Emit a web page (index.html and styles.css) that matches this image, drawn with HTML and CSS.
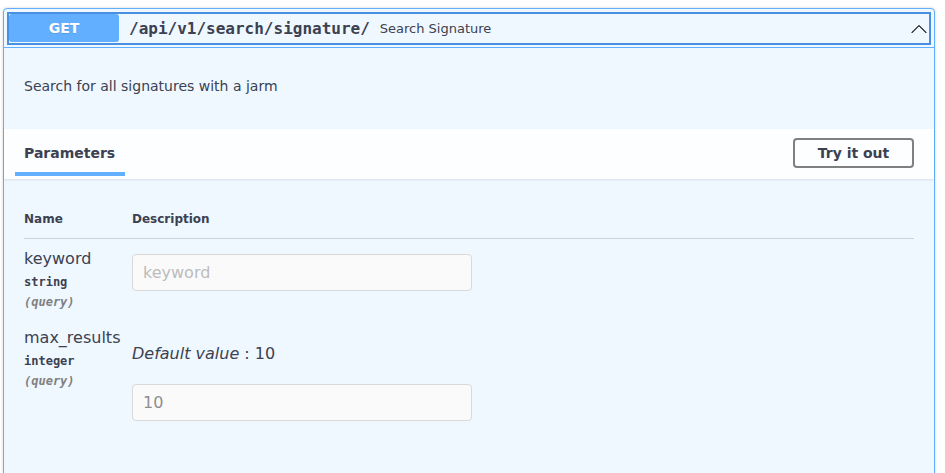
FILE: index.html
```html
<!DOCTYPE html>
<html>
<head>
<meta charset="utf-8">
<link rel="stylesheet" href="styles.css">
</head>
<body>
<div class="wrap">
  <div class="opblock">
    <div class="summary">
      <span class="method">GET</span>
      <span class="path">/api/v1/search/signature/</span>
      <span class="summary-desc">Search Signature</span>
      <svg class="arrow" width="20" height="20" viewBox="0 0 20 20"><path d="M17.418 14.908c-.184.181-.483.181-.668 0L10 8.183l-6.75 6.725c-.184.181-.483.181-.668 0a.464.464 0 0 1 0-.663l7.084-7.065a.49.49 0 0 1 .668 0l7.084 7.065c.184.183.184.481 0 .663z"/></svg>
    </div>
    <div class="desc-wrap">
      <p>Search for all signatures with a jarm</p>
    </div>
    <div class="section-header">
      <div class="tab"><span>Parameters</span></div>
      <button class="try-btn">Try it out</button>
    </div>
    <div class="table-container">
      <div class="params">
        <div class="th">Name</div>
        <div class="th">Description</div>
        <div class="col-name">
          <div class="p-name">keyword</div>
          <div class="p-type">string</div>
          <div class="p-in">(query)</div>
        </div>
        <div class="col-desc">
          <input class="p-input" type="text" placeholder="keyword" disabled>
        </div>
        <div class="col-name">
          <div class="p-name">max_results</div>
          <div class="p-type">integer</div>
          <div class="p-in">(query)</div>
        </div>
        <div class="col-desc">
          <p class="default"><i>Default value</i> : 10</p>
          <input class="p-input second" type="text" value="10" disabled>
        </div>
      </div>
    </div>
  </div>
</div>
</body>
</html>
```

FILE: styles.css
```css
html, body {
  margin: 0;
  padding: 0;
  background: #ffffff;
}
body {
  font-family: "DejaVu Sans", sans-serif;
  color: #3b4151;
}
.wrap {
  padding: 8px 10px 0 3px;
}
.opblock {
  border: 1px solid #61affe;
  border-radius: 4px;
  background: #eff7ff;
  box-shadow: 0 0 3px rgba(0, 0, 0, 0.19);
  padding-bottom: 36px;
}
.summary {
  display: flex;
  align-items: center;
  padding: 5px;
  border-bottom: 1px solid #61affe;
  outline: 2px solid #4990e2;
  outline-offset: -5px;
}
.method {
  box-sizing: border-box;
  width: 110px;
  height: 28px;
  display: flex;
  align-items: center;
  justify-content: center;
  background: #61affe;
  color: #fff;
  font-size: 14px;
  font-weight: 700;
  border-radius: 3px;
  text-shadow: 0 1px 0 rgba(0, 0, 0, 0.1);
}
.path {
  font-family: "DejaVu Sans Mono", monospace;
  font-size: 16px;
  font-weight: 700;
  padding: 0 10px;
  color: #3b4151;
}
.summary-desc {
  font-size: 13px;
  flex: 1;
  color: #3b4151;
}
.arrow {
  fill: #000;
}
.desc-wrap {
  padding: 16px 20px 21px;
  font-size: 14px;
}
.desc-wrap p {
  margin: 14px 0;
  line-height: 16px;
}
.section-header {
  display: flex;
  align-items: center;
  justify-content: space-between;
  min-height: 50px;
  box-sizing: border-box;
  padding: 7px 20px 9px;
  background: rgba(255, 255, 255, 0.8);
  box-shadow: 0 1px 2px rgba(0, 0, 0, 0.1);
}
.tab {
  font-size: 14px;
  font-weight: 700;
}
.tab span {
  position: relative;
}
.tab span::after {
  content: "";
  position: absolute;
  left: -9px;
  right: -10px;
  bottom: -15px;
  height: 4px;
  background: #61affe;
}
.try-btn {
  font-family: "DejaVu Sans", sans-serif;
  font-size: 14px;
  font-weight: 700;
  color: #3b4151;
  background: transparent;
  border: 2px solid #808080;
  border-radius: 4px;
  width: 121px;
  height: 30px;
  padding: 0;
}
.table-container {
  padding: 21px 20px 20px;
}
.params {
  display: grid;
  grid-template-columns: 108px 1fr;
}
.th {
  font-size: 12px;
  font-weight: 700;
  padding: 12px 0;
  line-height: 14px;
  border-bottom: 1px solid rgba(59, 65, 81, 0.2);
}
.col-name {
  padding: 10px 0 9px;
}
.p-name {
  font-size: 16px;
  line-height: 19px;
}
.p-type {
  font-family: "DejaVu Sans Mono", monospace;
  font-size: 12px;
  font-weight: 700;
  line-height: 14px;
  margin-top: 7px;
}
.p-in {
  font-family: "DejaVu Sans Mono", monospace;
  font-size: 12px;
  font-style: italic;
  font-weight: 700;
  color: #808080;
  line-height: 14px;
  margin-top: 6px;
}
.col-desc {
  padding-top: 10px;
}
.p-input {
  display: block;
  box-sizing: border-box;
  width: 340px;
  height: 37px;
  margin: 5px 0 0;
  padding: 8px 10px;
  border: 1px solid #d9d9d9;
  border-radius: 4px;
  background: #fafafa;
  font-family: "DejaVu Sans", sans-serif;
  font-size: 16px;
  color: #8e8e8e;
}
.p-input::placeholder {
  color: #bcbcbc;
}
.default {
  margin: 16px 0 0;
  font-size: 16px;
  line-height: 19px;
}
.p-input.second {
  margin-top: 21px;
}
```
